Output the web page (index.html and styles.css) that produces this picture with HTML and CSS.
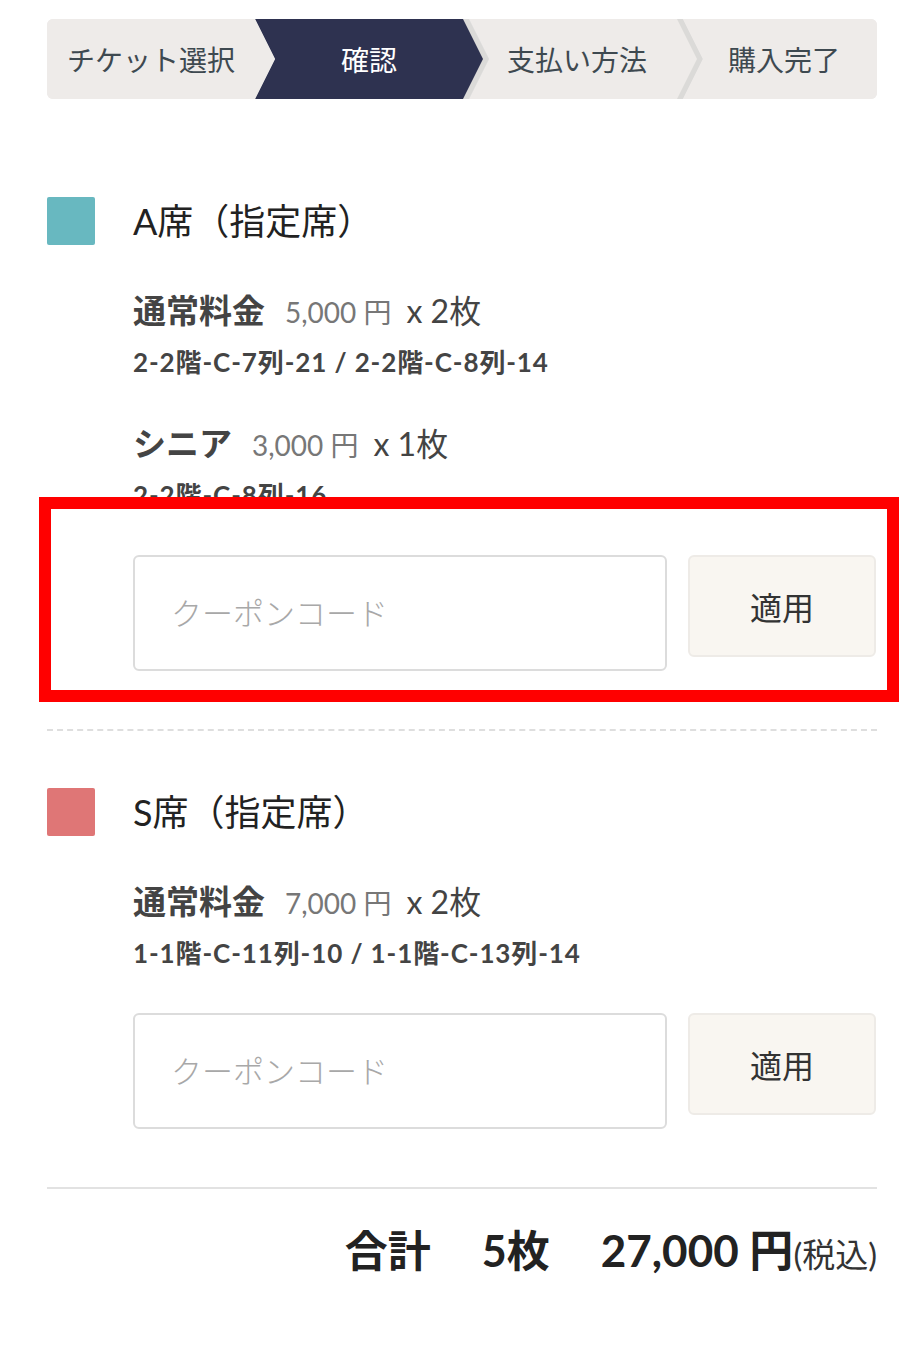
FILE: index.html
```html
<!DOCTYPE html>
<html lang="ja">
<head>
    <meta charset="UTF-8">
    <meta name="viewport" content="width=device-width, initial-scale=1.0">
    <title>確認</title>
    <link rel="stylesheet" href="styles.css">
</head>
<body>
    <div class="page">
        <ol class="steps">
            <li class="step step-first"><span class="step-label">チケット選択</span></li>
            <li class="step step-current"><span class="step-label">確認</span></li>
            <li class="step step-pay"><span class="step-label">支払い方法</span></li>
            <li class="step step-last"><span class="step-label">購入完了</span></li>
        </ol>

        <!-- A席 -->
        <section class="seat-group">
            <div class="seat-head">
                <span class="seat-color seat-a"></span>
                <h2 class="seat-title">A席（指定席）</h2>
            </div>
            <div class="ticket">
                <p class="ticket-price"><b>通常料金</b><span class="price">5,000 円</span><span class="qty">x 2枚</span></p>
                <p class="ticket-seats">2-2階-C-7列-21 / 2-2階-C-8列-14</p>
            </div>
            <div class="ticket">
                <p class="ticket-price"><b>シニア</b><span class="price">3,000 円</span><span class="qty">x 1枚</span></p>
                <p class="ticket-seats">2-2階-C-8列-16</p>
            </div>
            <form class="coupon">
                <input type="text" placeholder="クーポンコード">
                <button type="button">適用</button>
            </form>
        </section>

        <!-- S席 -->
        <section class="seat-group">
            <div class="seat-head">
                <span class="seat-color seat-s"></span>
                <h2 class="seat-title">S席（指定席）</h2>
            </div>
            <div class="ticket">
                <p class="ticket-price"><b>通常料金</b><span class="price">7,000 円</span><span class="qty">x 2枚</span></p>
                <p class="ticket-seats">1-1階-C-11列-10 / 1-1階-C-13列-14</p>
            </div>
            <form class="coupon">
                <input type="text" placeholder="クーポンコード">
                <button type="button">適用</button>
            </form>
        </section>

        <div class="total">
            <span class="total-label">合計</span>
            <span class="total-count">5枚</span>
            <span class="total-price">27,000 円</span><span class="total-tax">(税込)</span>
        </div>

        <div class="highlight"></div>
    </div>
</body>
</html>
```

FILE: styles.css
```css
body {
    margin: 0;
    background: #fff;
    color: #444;
    font-family: Lato, "Noto Sans CJK JP", sans-serif;
}

p, h2 {
    margin: 0;
}

.page {
    position: relative;
    padding: 19px 22px 0 47px;
}

/* ステップ表示 */
.steps {
    display: flex;
    height: 80px;
    margin: 0;
    padding: 0;
    list-style: none;
    background: #eeebe9;
    border-radius: 6px;
    overflow: hidden;
}

.step {
    flex: none;
    width: 234px;
    height: 80px;
    margin-left: -20px;
    background: #dbdad8;
    clip-path: polygon(0 0, calc(100% - 20px) 0, 100% 50%, calc(100% - 20px) 100%, 0 100%, 20px 50%);
}

.step-label {
    display: flex;
    align-items: center;
    justify-content: center;
    box-sizing: border-box;
    height: 100%;
    margin-right: 6px;
    padding: 0 20px;
    background: #eeebe9;
    color: #3e4950;
    font-size: 28px;
    clip-path: polygon(0 0, calc(100% - 20px) 0, 100% 50%, calc(100% - 20px) 100%, 0 100%, 20px 50%);
}

.step-first {
    width: 228px;
    margin-left: 0;
    background: #eeebe9;
    clip-path: polygon(0 0, calc(100% - 20px) 0, 100% 50%, calc(100% - 20px) 100%, 0 100%);
}

.step-first .step-label {
    margin-right: 0;
    padding: 0 20px 0 0;
    clip-path: none;
}

.step-current .step-label {
    background: #2e3250;
    color: #fff;
}

.step-pay .step-label {
    padding: 0 32px 0 20px;
}

.step-last {
    width: 194px;
    clip-path: polygon(0 0, 100% 0, 100% 100%, 0 100%, 20px 50%);
}

.step-last .step-label {
    margin-right: 0;
    padding: 0 12px 0 20px;
    clip-path: none;
}

/* 席種 */
.seat-group {
    padding-top: 98px;
    padding-bottom: 58px;
    border-bottom: 2px dashed #dedede;
}

.seat-group + .seat-group {
    padding-top: 57px;
    border-bottom: 2px solid #e2e2e2;
}

.seat-head {
    display: flex;
    align-items: center;
    gap: 38px;
}

.seat-color {
    width: 48px;
    height: 48px;
    border-radius: 2px;
}

.seat-a {
    background: #68b8c0;
}

.seat-s {
    background: #df7676;
}

.seat-title {
    font-size: 36px;
    font-weight: 400;
    line-height: 48px;
    color: #222;
}

.ticket {
    margin: 43px 0 0 86px;
    padding-bottom: 2px;
}

.ticket + .ticket {
    margin-top: 39px;
}

.ticket-price {
    display: flex;
    align-items: baseline;
    height: 44px;
    line-height: 44px;
}

.ticket-price b {
    font-size: 33px;
    color: #444;
}

.price {
    margin-left: 20px;
    font-size: 28px;
    color: #777;
}

.qty {
    margin-left: 15px;
    font-size: 32px;
    color: #444;
}

.ticket-seats {
    margin-top: 12px;
    font-size: 26px;
    font-weight: 700;
    line-height: 36px;
    letter-spacing: 0.9px;
    color: #444;
}

/* クーポン */
.coupon {
    display: flex;
    align-items: flex-start;
    gap: 21px;
    margin: 40px 0 0 86px;
}

.coupon input {
    box-sizing: border-box;
    width: 534px;
    height: 116px;
    padding: 0 36px;
    border: 2px solid #dcdcdc;
    border-radius: 6px;
    font-family: Lato, "Noto Sans CJK JP", sans-serif;
    font-size: 31px;
    font-weight: 300;
    color: #333;
}

.coupon input::placeholder {
    color: #a8a8a8;
}

.coupon button {
    box-sizing: border-box;
    width: 188px;
    height: 102px;
    padding: 0;
    border: 2px solid #eeebe7;
    border-radius: 6px;
    background: #f9f6f1;
    font-family: Lato, "Noto Sans CJK JP", sans-serif;
    font-size: 32px;
    color: #333;
    cursor: pointer;
}

/* 合計 */
.total {
    display: flex;
    justify-content: flex-end;
    align-items: baseline;
    margin-top: 31px;
    line-height: 60px;
    color: #222;
    font-weight: 700;
}

.total-label,
.total-count {
    font-size: 43px;
    margin-right: 51px;
}

.total-price {
    font-size: 44px;
}

.total-tax {
    font-size: 33px;
    font-weight: 400;
    color: #333;
}

/* 注釈の赤枠 */
.highlight {
    position: absolute;
    left: 39px;
    top: 497px;
    width: 860px;
    height: 205px;
    box-sizing: border-box;
    border: 12px solid #ff0000;
}
```
